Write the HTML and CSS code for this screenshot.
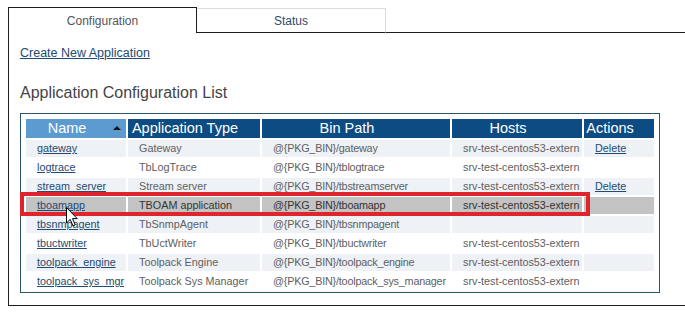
FILE: index.html
```html
<!DOCTYPE html>
<html lang="en">

<head>
    <meta charset="UTF-8">
    <title>Application Configuration</title>
    <link rel="stylesheet" href="styles.css">
</head>

<body>
    <div class="page">
        <div class="tabs">
            <div class="tab active">Configuration</div>
            <div class="tab status">Status</div>
            <div class="tabFill"></div>
        </div>

        <div class="panel">
            <p class="createLine"><a href="#">Create New Application</a></p>
            <h2>Application Configuration List</h2>

            <div class="listBox">
                <table>
                    <colgroup>
                        <col class="colName">
                        <col class="colType">
                        <col class="colBin">
                        <col class="colHosts">
                        <col class="colActions">
                    </colgroup>
                    <thead>
                        <tr>
                            <th class="sorted">Name</th>
                            <th>Application Type</th>
                            <th>Bin Path</th>
                            <th>Hosts</th>
                            <th>Actions</th>
                        </tr>
                    </thead>
                    <tbody>
                        <tr class="odd">
                            <td><a href="#">gateway</a></td>
                            <td>Gateway</td>
                            <td class="bin">@{PKG_BIN}/gateway</td>
                            <td>srv-test-centos53-extern</td>
                            <td><a href="#">Delete</a></td>
                        </tr>
                        <tr>
                            <td><a href="#">logtrace</a></td>
                            <td>TbLogTrace</td>
                            <td class="bin">@{PKG_BIN}/tblogtrace</td>
                            <td>srv-test-centos53-extern</td>
                            <td></td>
                        </tr>
                        <tr class="odd">
                            <td><a href="#">stream_server</a></td>
                            <td>Stream server</td>
                            <td class="bin">@{PKG_BIN}/tbstreamserver</td>
                            <td>srv-test-centos53-extern</td>
                            <td><a href="#">Delete</a></td>
                        </tr>
                        <tr class="hover">
                            <td><a href="#">tboamapp</a></td>
                            <td>TBOAM application</td>
                            <td class="bin">@{PKG_BIN}/tboamapp</td>
                            <td>srv-test-centos53-extern</td>
                            <td></td>
                        </tr>
                        <tr class="odd">
                            <td><a href="#">tbsnmpagent</a></td>
                            <td>TbSnmpAgent</td>
                            <td class="bin">@{PKG_BIN}/tbsnmpagent</td>
                            <td></td>
                            <td></td>
                        </tr>
                        <tr>
                            <td><a href="#">tbuctwriter</a></td>
                            <td>TbUctWriter</td>
                            <td class="bin">@{PKG_BIN}/tbuctwriter</td>
                            <td>srv-test-centos53-extern</td>
                            <td></td>
                        </tr>
                        <tr class="odd">
                            <td><a href="#">toolpack_engine</a></td>
                            <td>Toolpack Engine</td>
                            <td class="bin">@{PKG_BIN}/toolpack_engine</td>
                            <td>srv-test-centos53-extern</td>
                            <td></td>
                        </tr>
                        <tr>
                            <td><a href="#">toolpack_sys_mgr</a></td>
                            <td>Toolpack Sys Manager</td>
                            <td class="bin">@{PKG_BIN}/toolpack_sys_manager</td>
                            <td>srv-test-centos53-extern</td>
                            <td></td>
                        </tr>
                    </tbody>
                </table>

                <!-- red highlight drawn over the selected row -->
                <div class="rowMark"></div>
                <svg class="cursor" width="12" height="20" viewBox="0 0 12 20">
                    <path d="M0.5 0.5 L0.5 16 L4.2 12.4 L7 18.8 L9.2 17.8 L6.5 11.6 L11.2 11.6 Z" fill="#fff" stroke="#000" stroke-width="1" stroke-linejoin="round"/>
                </svg>
            </div>
        </div>
    </div>
</body>

</html>
```

FILE: styles.css
```css
html, body {
    margin: 0;
    overflow: hidden;
    background: #fff;
    font-family: "Liberation Sans", Arial, sans-serif;
}
.page {
    padding: 7px 0 0 8px;
}
.tabs {
    display: flex;
    align-items: flex-end;
}
.tab {
    box-sizing: border-box;
    width: 189px;
    height: 25px;
    display: flex;
    align-items: center;
    justify-content: center;
    font-size: 12px;
}
.tab.active {
    height: 26px;
    border: 1px solid #1e1e1e;
    border-bottom: none;
    color: #555;
}
.tab.status {
    border-top: 1px solid #ddd;
    border-right: 1px solid #ddd;
    border-bottom: 1px solid #1e1e1e;
    color: #2d4a68;
}
.tabFill {
    flex: 1;
    border-bottom: 1px solid #1e1e1e;
}
/* panel runs on past the right edge of the window, so no right border */
.panel {
    box-sizing: border-box;
    height: 273px;
    padding: 13px 0 0 11px;
    border-left: 1px solid #1e1e1e;
    border-bottom: 1px solid #1e1e1e;
}
.createLine {
    margin: 0;
    font-size: 12.5px;
    line-height: 15px;
}
a {
    color: #234a72;
}
h2 {
    margin: 22px 0 0;
    font-size: 16px;
    font-weight: normal;
    line-height: 19px;
    color: #444;
}
.listBox {
    position: relative;
    width: 632px;
    margin-top: 11px;
    padding: 3px 3px 0;
    border: 1px solid #2c5669;
}
.listBox table {
    width: 632px;
    border-spacing: 2px;
    table-layout: fixed;
    font-size: 10.8px;
    color: #606060;
}
.colName { width: 100px; }
.colType { width: 132px; }
.colBin { width: 188px; }
.colHosts { width: 130px; }
.colActions { width: 70px; }

.listBox th {
    position: relative;
    height: 19px;
    padding: 0 18px 0 0;
    background: #0d4c83;
    color: #fff;
    font-size: 14.5px;
    font-weight: normal;
    line-height: 19px;
    white-space: nowrap;
}
.listBox th.sorted {
    background: #5b9bd0;
}
.listBox th.sorted::after {
    content: "";
    position: absolute;
    right: 5px;
    top: 7px;
    border-left: 4px solid transparent;
    border-right: 4px solid transparent;
    border-bottom: 4px solid #111;
}
.listBox td {
    height: 17px;
    padding: 0 0 0 11px;
    line-height: 17px;
    white-space: nowrap;
    overflow: hidden;
}
.listBox td.bin {
    letter-spacing: -0.2px;
}
.listBox tr.odd td {
    background: #eef1f5;
}
.listBox tr.hover td {
    background: #c3c3c3;
    color: #333;
}
.rowMark {
    position: absolute;
    left: -1px;
    top: 78px;
    box-sizing: border-box;
    width: 570px;
    height: 24px;
    border: 4px solid #e0242b;
}
.cursor {
    position: absolute;
    left: 45px;
    top: 93px;
}
```
